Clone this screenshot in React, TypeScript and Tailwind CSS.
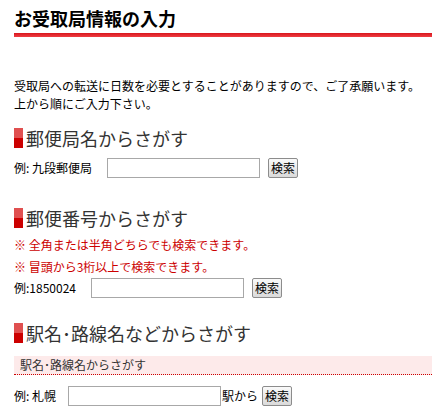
import React from "react";

const font = { fontFamily: '"Noto Sans CJK JP", "Noto Sans", sans-serif' };

const SectionTitle = ({ children }: { children: React.ReactNode }) => (
  <h2 className="flex items-center h-[28px] text-[18px] leading-[28px] text-[#333] font-normal">
    <span className="flex flex-col w-[9px] h-[20px] mr-[3px] shrink-0">
      <span className="h-1/2 bg-[#e05050]" />
      <span className="h-1/2 bg-[#cc0000]" />
    </span>
    {children}
  </h2>
);

const SearchButton = () => (
  <button className="w-[30px] h-[20px] border border-[#8c8c8c] rounded-[2px] bg-gradient-to-b from-[#fafafa] to-[#dadada] text-[12px] leading-[18px] text-black">
    検索
  </button>
);

const TextInput = () => (
  <input
    type="text"
    className="w-[153px] h-[20px] border border-[#a8a8a8] bg-white outline-none"
  />
);

export default function App() {
  return (
    <div className="w-[432px] min-h-[419px] bg-white pl-[14px] text-black" style={font}>
      {/* ページタイトル */}
      <h1 className="mt-[8px] h-[20px] text-[18px] leading-[20px] font-bold">お受取局情報の入力</h1>
      <div className="mt-[5px] h-[4px] bg-gradient-to-b from-[#d8121c] to-[#ee3c42]" />

      <p className="mt-[40px] text-[12px] leading-[18px]">
        受取局への転送に日数を必要とすることがありますので、ご了承願います。
        <br />
        上から順にご入力下さい。
      </p>

      {/* 郵便局名 */}
      <div className="mt-[11px]">
        <SectionTitle>郵便局名からさがす</SectionTitle>
      </div>
      <div className="mt-[6px] flex items-center h-[20px] text-[12px]">
        <span className="w-[93px]">例: 九段郵便局</span>
        <TextInput />
        <span className="ml-[8px]">
          <SearchButton />
        </span>
      </div>

      {/* 郵便番号 */}
      <div className="mt-[26px]">
        <SectionTitle>郵便番号からさがす</SectionTitle>
      </div>
      <p className="mt-[4px] text-[12px] leading-[18px] text-[#cc0000]">※ 全角または半角どちらでも検索できます。</p>
      <p className="mt-[4px] text-[12px] leading-[18px] text-[#cc0000]">※ 冒頭から3桁以上で検索できます。</p>
      <div className="mt-[2px] flex items-center h-[20px] text-[12px]">
        <span className="w-[77px]">例:1850024</span>
        <TextInput />
        <span className="ml-[8px]">
          <SearchButton />
        </span>
      </div>

      {/* 駅名・路線名 */}
      <div className="mt-[21px]">
        <SectionTitle>駅名･路線名などからさがす</SectionTitle>
      </div>
      <div className="mt-[9px] h-[19px] bg-[#fdeaea] border-b border-dotted border-[#cc0000] pl-[6px] text-[12px] leading-[18px] text-[#333]">
        駅名･路線名からさがす
      </div>
      <div className="mt-[11px] flex items-center h-[20px] text-[12px]">
        <span className="w-[54px]">例: 札幌</span>
        <TextInput />
        <span className="ml-[1px]">駅から</span>
        <span className="ml-[4px]">
          <SearchButton />
        </span>
      </div>
    </div>
  );
}
